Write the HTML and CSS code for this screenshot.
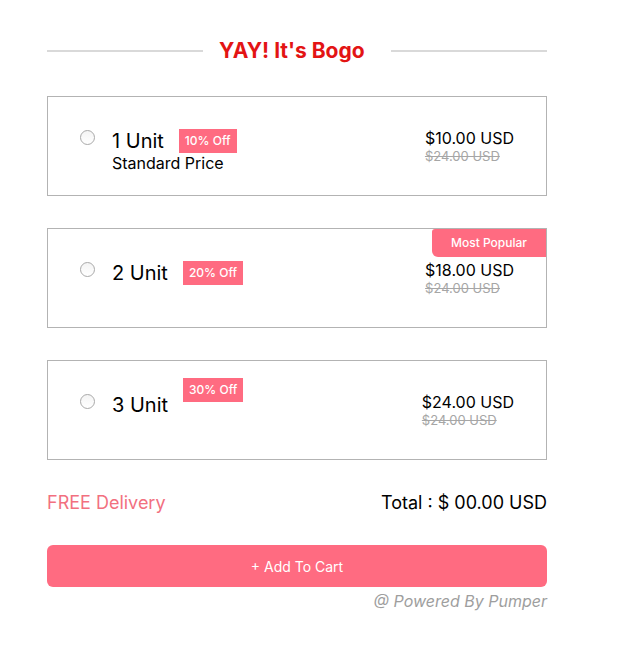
FILE: index.html
```html
<!DOCTYPE html>
<html lang="en">
<head>
<meta charset="utf-8">
<title>YAY! It's Bogo</title>
<link rel="stylesheet" href="styles.css">
</head>
<body>
<div class="bogo">
  <div class="bogo-title">
    <span class="bogo-line"></span>
    <h2 class="bogo-heading">YAY! It's Bogo</h2>
    <span class="bogo-line"></span>
  </div>

  <div class="offers">
    <div class="offer">
      <div class="offer-row">
        <span class="radio"></span>
        <div class="offer-info">
          <div class="offer-name-row">
            <span class="offer-name">1 Unit</span>
            <span class="badge">10% Off</span>
          </div>
          <div class="offer-sub">Standard Price</div>
        </div>
        <div class="offer-price">
          <div class="price-now">$10.00 USD</div>
          <div class="price-old">$24.00 USD</div>
        </div>
      </div>
    </div>

    <div class="offer">
      <span class="popular">Most Popular</span>
      <div class="offer-row">
        <span class="radio"></span>
        <div class="offer-info">
          <div class="offer-name-row">
            <span class="offer-name">2 Unit</span>
            <span class="badge">20% Off</span>
          </div>
        </div>
        <div class="offer-price">
          <div class="price-now">$18.00 USD</div>
          <div class="price-old">$24.00 USD</div>
        </div>
      </div>
    </div>

    <div class="offer">
      <div class="offer-row">
        <span class="radio"></span>
        <div class="offer-info">
          <div class="offer-name-row">
            <span class="offer-name">3 Unit</span>
            <span class="badge badge-raised">30% Off</span>
          </div>
        </div>
        <div class="offer-price">
          <div class="price-now">$24.00 USD</div>
          <div class="price-old">$24.00 USD</div>
        </div>
      </div>
    </div>
  </div>

  <div class="summary">
    <span class="delivery">FREE Delivery</span>
    <span class="total">Total : $ 00.00 USD</span>
  </div>

  <button class="cart-btn" type="button">+ Add To Cart</button>
  <div class="powered">@ Powered By Pumper</div>
</div>
</body>
</html>
```

FILE: styles.css
```css
* { box-sizing: border-box; }

body {
  margin: 0;
  background: #ffffff;
  font-family: Inter, "Noto Sans", sans-serif;
  color: #000;
}

.bogo {
  width: 500px;
  margin-left: 47px;
  padding-top: 37px;
}

.bogo-title {
  display: flex;
  align-items: center;
}

.bogo-line {
  flex: none;
  width: 156px;
  height: 2px;
  background: #d9d9d9;
}

.bogo-heading {
  flex: 1;
  margin: 0;
  padding: 0 0 0 16px;
  font-size: 21px;
  font-weight: 700;
  line-height: 27px;
  color: #e31414;
  white-space: nowrap;
}

.offers {
  margin-top: 32px;
  display: flex;
  flex-direction: column;
  gap: 32px;
}

.offer {
  position: relative;
  height: 100px;
  border: 1px solid #b3b3b3;
  padding: 32px 32px 0 32px;
}

.offer-row {
  display: flex;
  align-items: flex-start;
}

.radio {
  width: 15px;
  height: 15px;
  margin-top: 1px;
  border: 1px solid #a9a9a9;
  border-radius: 50%;
  background: linear-gradient(#f4f4f4, #ffffff);
  flex-shrink: 0;
}

.offer-info {
  margin-left: 17px;
  display: flex;
  flex-direction: column;
}

.offer-name-row {
  display: flex;
  align-items: flex-start;
  gap: 15px;
}

.offer-name {
  font-size: 20px;
  line-height: 24px;
  font-weight: 400;
}

.badge {
  height: 24px;
  padding: 0 6px;
  background: #ff6b81;
  color: #fff;
  font-size: 12px;
  font-weight: 500;
  line-height: 24px;
}

.badge-raised {
  margin-top: -15px;
}

.offer-sub {
  font-size: 16px;
  line-height: 20px;
}

.offer-price {
  margin-left: auto;
  text-align: left;
}

.price-now {
  font-size: 16px;
  line-height: 19px;
}

.price-old {
  font-size: 13px;
  line-height: 16px;
  color: #a6a6a6;
  text-decoration: line-through;
}

.popular {
  position: absolute;
  top: 0;
  right: 0;
  width: 114px;
  height: 28px;
  background: #ff6b81;
  color: #fff;
  font-size: 12px;
  font-weight: 500;
  line-height: 27px;
  text-align: center;
  border-radius: 3px 0 0 6px;
}

.summary {
  margin-top: 32px;
  display: flex;
  justify-content: space-between;
  font-size: 18px;
  line-height: 22px;
}

.delivery {
  color: #f2707f;
}

.total {
  color: #000;
}

.cart-btn {
  display: block;
  width: 100%;
  height: 42px;
  margin-top: 31px;
  border: 0;
  border-radius: 6px;
  background: #ff6b81;
  color: #fff;
  font-family: Inter, "Noto Sans", sans-serif;
  font-size: 14px;
  font-weight: 400;
}

.powered {
  margin-top: 5px;
  text-align: right;
  font-size: 16px;
  line-height: 19px;
  font-style: italic;
  color: #9e9e9e;
}
```
